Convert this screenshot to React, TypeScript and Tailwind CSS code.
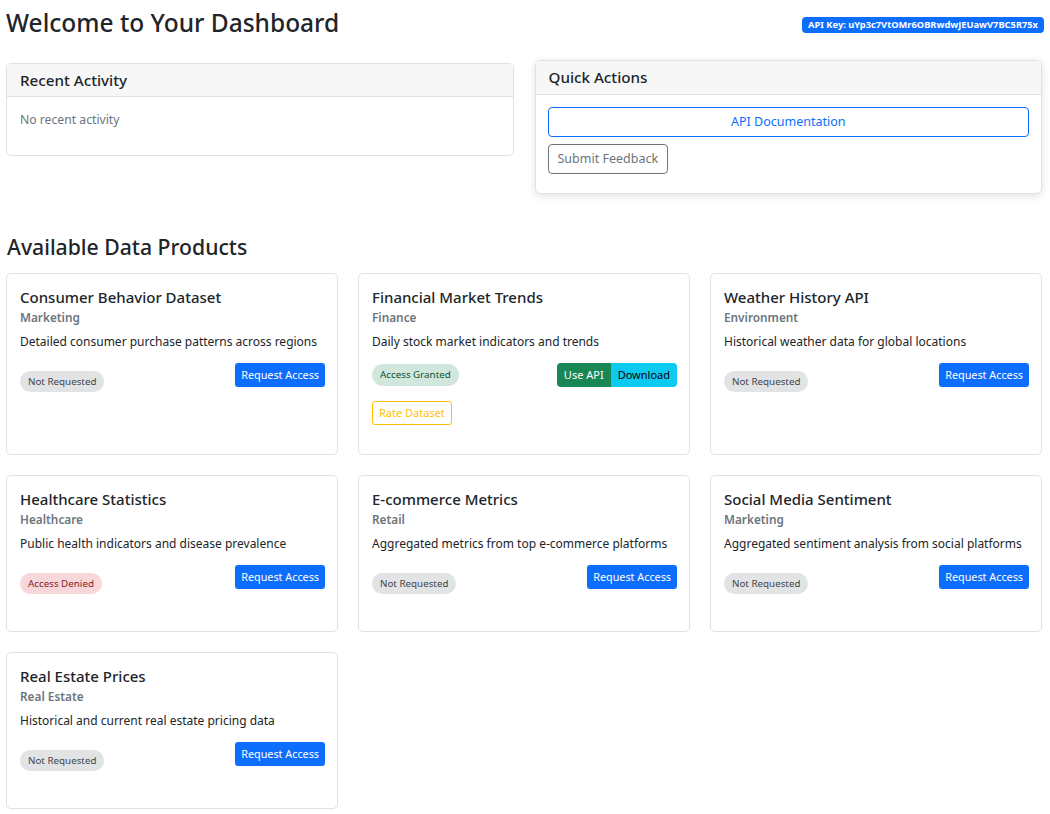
import type { ReactNode } from 'react';

type Status = 'none' | 'granted' | 'denied';

type Product = {
  name: string;
  category: string;
  description: string;
  status: Status;
};

const products: Product[] = [
  {
    name: 'Consumer Behavior Dataset',
    category: 'Marketing',
    description: 'Detailed consumer purchase patterns across regions',
    status: 'none',
  },
  {
    name: 'Financial Market Trends',
    category: 'Finance',
    description: 'Daily stock market indicators and trends',
    status: 'granted',
  },
  {
    name: 'Weather History API',
    category: 'Environment',
    description: 'Historical weather data for global locations',
    status: 'none',
  },
  {
    name: 'Healthcare Statistics',
    category: 'Healthcare',
    description: 'Public health indicators and disease prevalence',
    status: 'denied',
  },
  {
    name: 'E-commerce Metrics',
    category: 'Retail',
    description: 'Aggregated metrics from top e-commerce platforms',
    status: 'none',
  },
  {
    name: 'Social Media Sentiment',
    category: 'Marketing',
    description: 'Aggregated sentiment analysis from social platforms',
    status: 'none',
  },
  {
    name: 'Real Estate Prices',
    category: 'Real Estate',
    description: 'Historical and current real estate pricing data',
    status: 'none',
  },
];

function StatusBadge({ status }: { status: Status }) {
  if (status === 'granted') {
    return (
      <span className="rounded-full bg-[#d1e7dd] px-[8px] py-[4px] text-[9.8px] leading-[14px] text-[#0f5132]">
        Access Granted
      </span>
    );
  }
  if (status === 'denied') {
    return (
      <span className="rounded-full bg-[#f8d7da] px-[8px] py-[4px] text-[9.8px] leading-[14px] text-[#842029]">
        Access Denied
      </span>
    );
  }
  return (
    <span className="rounded-full bg-[#e2e3e5] px-[8px] py-[4px] text-[9.8px] leading-[14px] text-[#41464b]">
      Not Requested
    </span>
  );
}

function Card({ children, className = '' }: { children: ReactNode; className?: string }) {
  return (
    <div className={`rounded-[5px] border border-[#dee2e6] bg-white ${className}`}>{children}</div>
  );
}

function ProductCard({ product }: { product: Product }) {
  const granted = product.status === 'granted';

  return (
    <Card className="pl-[13px] pr-[12px] pt-[12px] pb-[29px]">
      <h5 className="text-[15px] font-medium leading-[22px] text-[#212529]">{product.name}</h5>
      <h6 className="text-[11.8px] font-semibold leading-[18px] text-[#6c757d]">{product.category}</h6>
      <p className="mt-[6px] text-[12px] leading-[20px] text-[#212529]">{product.description}</p>
      {granted ? (
        <>
          <div className="mt-[11px] flex items-center justify-between">
            <StatusBadge status={product.status} />
            <div className="flex overflow-hidden rounded-[4px] text-[11px] leading-[24px]">
              <button type="button" className="bg-[#198754] px-[7px] text-white">
                Use API
              </button>
              <button type="button" className="bg-[#0dcaf0] px-[7px] text-black">
                Download
              </button>
            </div>
          </div>
          <button
            type="button"
            className="mt-[14px] rounded-[3px] border border-[#ffc107] px-[6px] text-[11px] leading-[22px] text-[#ffc107]"
          >
            Rate Dataset
          </button>
        </>
      ) : (
        <div className="mt-[9px] flex items-start justify-between">
          <div className="pt-[6px]">
            <StatusBadge status={product.status} />
          </div>
          <div className="pb-[13px]">
            <button
              type="button"
              className="rounded-[3px] bg-[#0d6efd] px-[6px] text-[10.8px] leading-[24px] text-white"
            >
              Request Access
            </button>
          </div>
        </div>
      )}
    </Card>
  );
}

export default function App() {
  return (
    <div
      className="min-h-screen bg-white pl-[6px] pr-[7px] pb-[6px] text-[#212529]"
      style={{ fontFamily: '"Noto Sans", "Open Sans", sans-serif' }}
    >
      <div className="-mr-[1px] flex items-start justify-between pt-[5px]">
        <h2 className="text-[24.5px] font-medium leading-[36px]">Welcome to Your Dashboard</h2>
        <span className="mt-[12px] rounded-[4px] bg-[#0d6efd] px-[6px] text-[9.3px] font-bold leading-[16px] text-white">
          API Key: uYp3c7VtOMr6OBRwdwJEUawV7BC5R75x
        </span>
      </div>

      <div className="mt-[19px] mr-[1px] grid grid-cols-2 items-start gap-x-[21px]">
        <Card className="mt-[3px] overflow-hidden">
          <div className="border-b border-[#dee2e6] bg-[#f7f7f7] px-[13px] py-[6px]">
            <h5 className="text-[15.2px] font-medium leading-[20px]">Recent Activity</h5>
          </div>
          <div className="px-[13px] pt-[14px] pb-[26px]">
            <p className="text-[12.2px] leading-[18px] text-[#6c757d]">No recent activity</p>
          </div>
        </Card>
        <Card className="overflow-hidden shadow-[0_2px_8px_rgba(0,0,0,0.12)]">
          <div className="border-b border-[#dee2e6] bg-[#f7f7f7] px-[13px] py-[6px]">
            <h5 className="text-[15.2px] font-medium leading-[21px]">Quick Actions</h5>
          </div>
          <div className="flex flex-col items-start gap-[7px] px-[12px] pt-[12px] pb-[19px]">
            <button
              type="button"
              className="w-full rounded-[4px] border border-[#0d6efd] text-[12.5px] leading-[28px] text-[#0d6efd]"
            >
              API Documentation
            </button>
            <button
              type="button"
              className="rounded-[4px] border border-[#6c757d] px-[9px] text-[12.5px] leading-[28px] text-[#6c757d]"
            >
              Submit Feedback
            </button>
          </div>
        </Card>
      </div>

      <h3 className="mt-[38px] ml-[1px] text-[21.2px] font-medium leading-[30px]">Available Data Products</h3>

      <div className="mt-[11px] mr-[1px] grid grid-cols-3 gap-[20px]">
        {products.map((product) => (
          <ProductCard key={product.name} product={product} />
        ))}
      </div>
    </div>
  );
}
